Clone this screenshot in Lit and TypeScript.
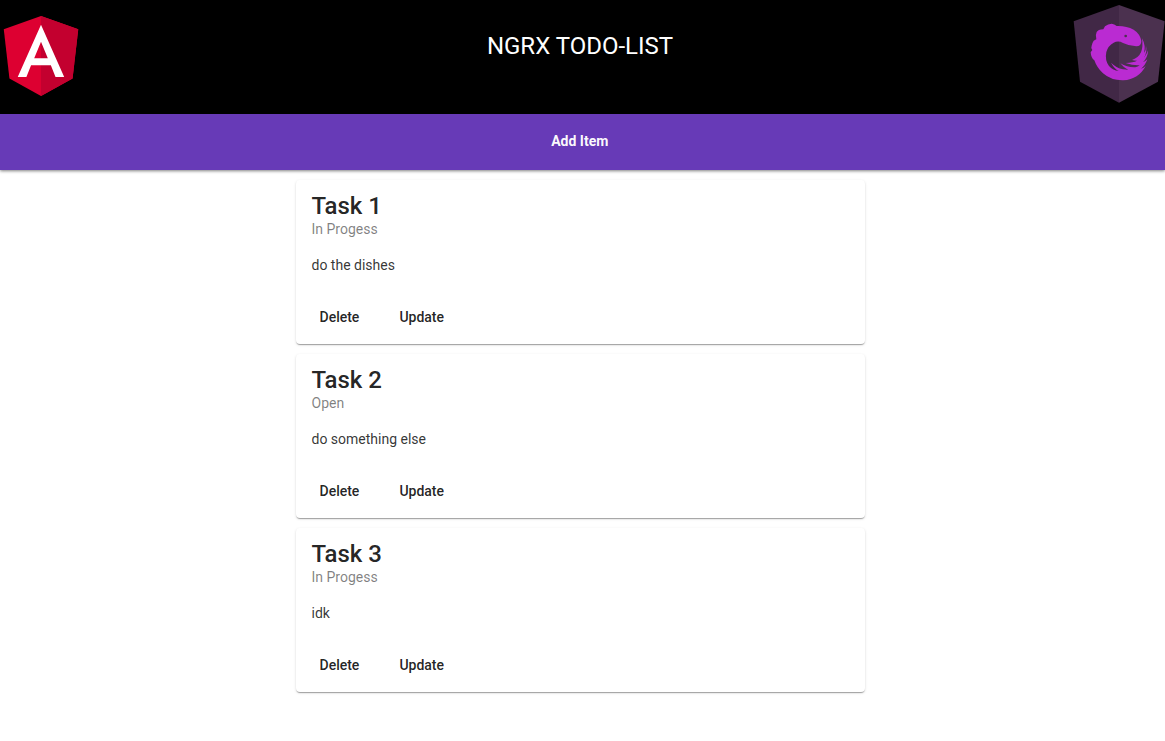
import { LitElement, html, css } from 'lit';
import { customElement, property, state } from 'lit/decorators.js';

interface Task {
  title: string;
  status: string;
  text: string;
}

@customElement('task-card')
class TaskCard extends LitElement {
  @property({ attribute: false }) task!: Task;

  static styles = css`
    :host {
      display: block;
      box-sizing: border-box;
      height: 164px;
      padding: 16px 16px 16px 15.5px;
      border-radius: 4px;
      background: #fff;
      color: rgba(0, 0, 0, 0.87);
      box-shadow: 0 2px 1px -1px rgba(0, 0, 0, 0.2), 0 1px 1px 0 rgba(0, 0, 0, 0.14),
        0 1px 3px 0 rgba(0, 0, 0, 0.12);
    }
    .title {
      font-size: 24px;
      font-weight: 500;
      line-height: 20px;
      margin-bottom: 3px;
    }
    .status {
      font-size: 14px;
      line-height: 20px;
      color: rgba(0, 0, 0, 0.5);
      margin-bottom: 16px;
    }
    .text {
      font-size: 14px;
      line-height: 20px;
      color: rgba(0, 0, 0, 0.8);
      margin: 0 0 25px;
    }
    .actions {
      display: flex;
      gap: 24px;
    }
    button {
      border: 0;
      background: none;
      padding: 0 8px;
      font: 500 14px/36px Roboto, sans-serif;
      color: rgba(0, 0, 0, 0.87);
      margin: -1px 0 0;
      height: 36px;
    }
  `;

  render() {
    return html`
      <div class="title">${this.task.title}</div>
      <div class="status">${this.task.status}</div>
      <p class="text">${this.task.text}</p>
      <div class="actions"><button>Delete</button><button>Update</button></div>
    `;
  }
}

@customElement('app-root')
class AppRoot extends LitElement {
  @state() tasks: Task[] = [
    { title: 'Task 1', status: 'In Progess', text: 'do the dishes' },
    { title: 'Task 2', status: 'Open', text: 'do something else' },
    { title: 'Task 3', status: 'In Progess', text: 'idk' },
  ];

  static styles = css`
    :host {
      display: block;
      height: 741px;
      overflow: hidden;
      background: #fff;
      font-family: Roboto, sans-serif;
    }
    header {
      display: grid;
      grid-template-columns: 100px 1fr 100px;
      height: 114px;
      background: #000;
      color: #fff;
    }
    h1 {
      margin: 30px 5px 0 0;
      font-size: 24px;
      font-weight: 400;
      line-height: 32px;
      text-align: center;
    }
    svg {
      display: block;
    }
    .bar {
      display: flex;
      justify-content: center;
      box-sizing: border-box;
      height: 56px;
      padding: 9px 5.5px 0 0;
      background: #673ab7;
      box-shadow: 0 1px 3px rgba(0, 0, 0, 0.5);
    }
    .add {
      border: 0;
      background: none;
      height: 36px;
      padding: 0;
      font: 700 14px/36px Roboto, sans-serif;
      color: rgba(255, 255, 255, 0.97);
    }
    main {
      display: flex;
      flex-direction: column;
      gap: 10px;
      width: 569px;
      margin: 10px 0 0 296px;
    }
  `;

  render() {
    return html`
      <header>
        <svg width="100" height="114" viewBox="22.5 -10 250 285">
          <path fill="#dd0031" d="M125 30 31.9 63.2l14.2 123.1L125 230l78.9-43.7 14.2-123.1z" />
          <path fill="#c3002f" d="M125 30v200l78.9-43.7 14.2-123.1z" />
          <path
            fill="#fff"
            d="M125 52.1 66.8 182.6h21.7l11.7-29.2h49.4l11.7 29.2H183L125 52.1zm17 83.3h-34l17-40.9z"
          />
        </svg>
        <h1>NGRX TODO-LIST</h1>
        <svg width="100" height="114" viewBox="0 0 300 342">
          <path fill="#412846" d="M162 15 26 64l19 181 117 63z" />
          <path fill="#4b314f" d="M162 15v293l117-63 20-181z" />
          <path
            fill="#ba2bd2"
            d="M120 79Q129 72 140 71Q148 72 155 78Q184 77 206 89Q225 101 229 123Q229 139 214 139Q192 138 174 129Q160 121 146 128Q129 137 124 156Q119 181 132 198Q144 212 161 213Q148 206 138 188Q153 203 174 208Q181 209 190 210Q174 201 166 190Q187 203 211 202Q219 200 224 196Q204 197 182 189Q205 188 216 182Q207 182 201 180Q221 173 228 157Q235 141 231 115Q243 137 237 159Q244 150 243 137Q247 155 237 173Q245 164 249 151Q249 171 234 187Q241 184 247 178Q241 196 228 206Q236 204 242 198Q221 238 175 241Q139 242 114 220Q96 204 88 181Q78 174 77 157L82 150Q77 143 80 137Q82 128 86 122L94 118Q90 106 95 96Q99 89 115 88Z"
          />
          <circle cx="182" cy="108" r="4" fill="#4b314f" />
        </svg>
      </header>
      <div class="bar"><button class="add">Add Item</button></div>
      <main>${this.tasks.map((t) => html`<task-card .task=${t}></task-card>`)}</main>
    `;
  }
}
